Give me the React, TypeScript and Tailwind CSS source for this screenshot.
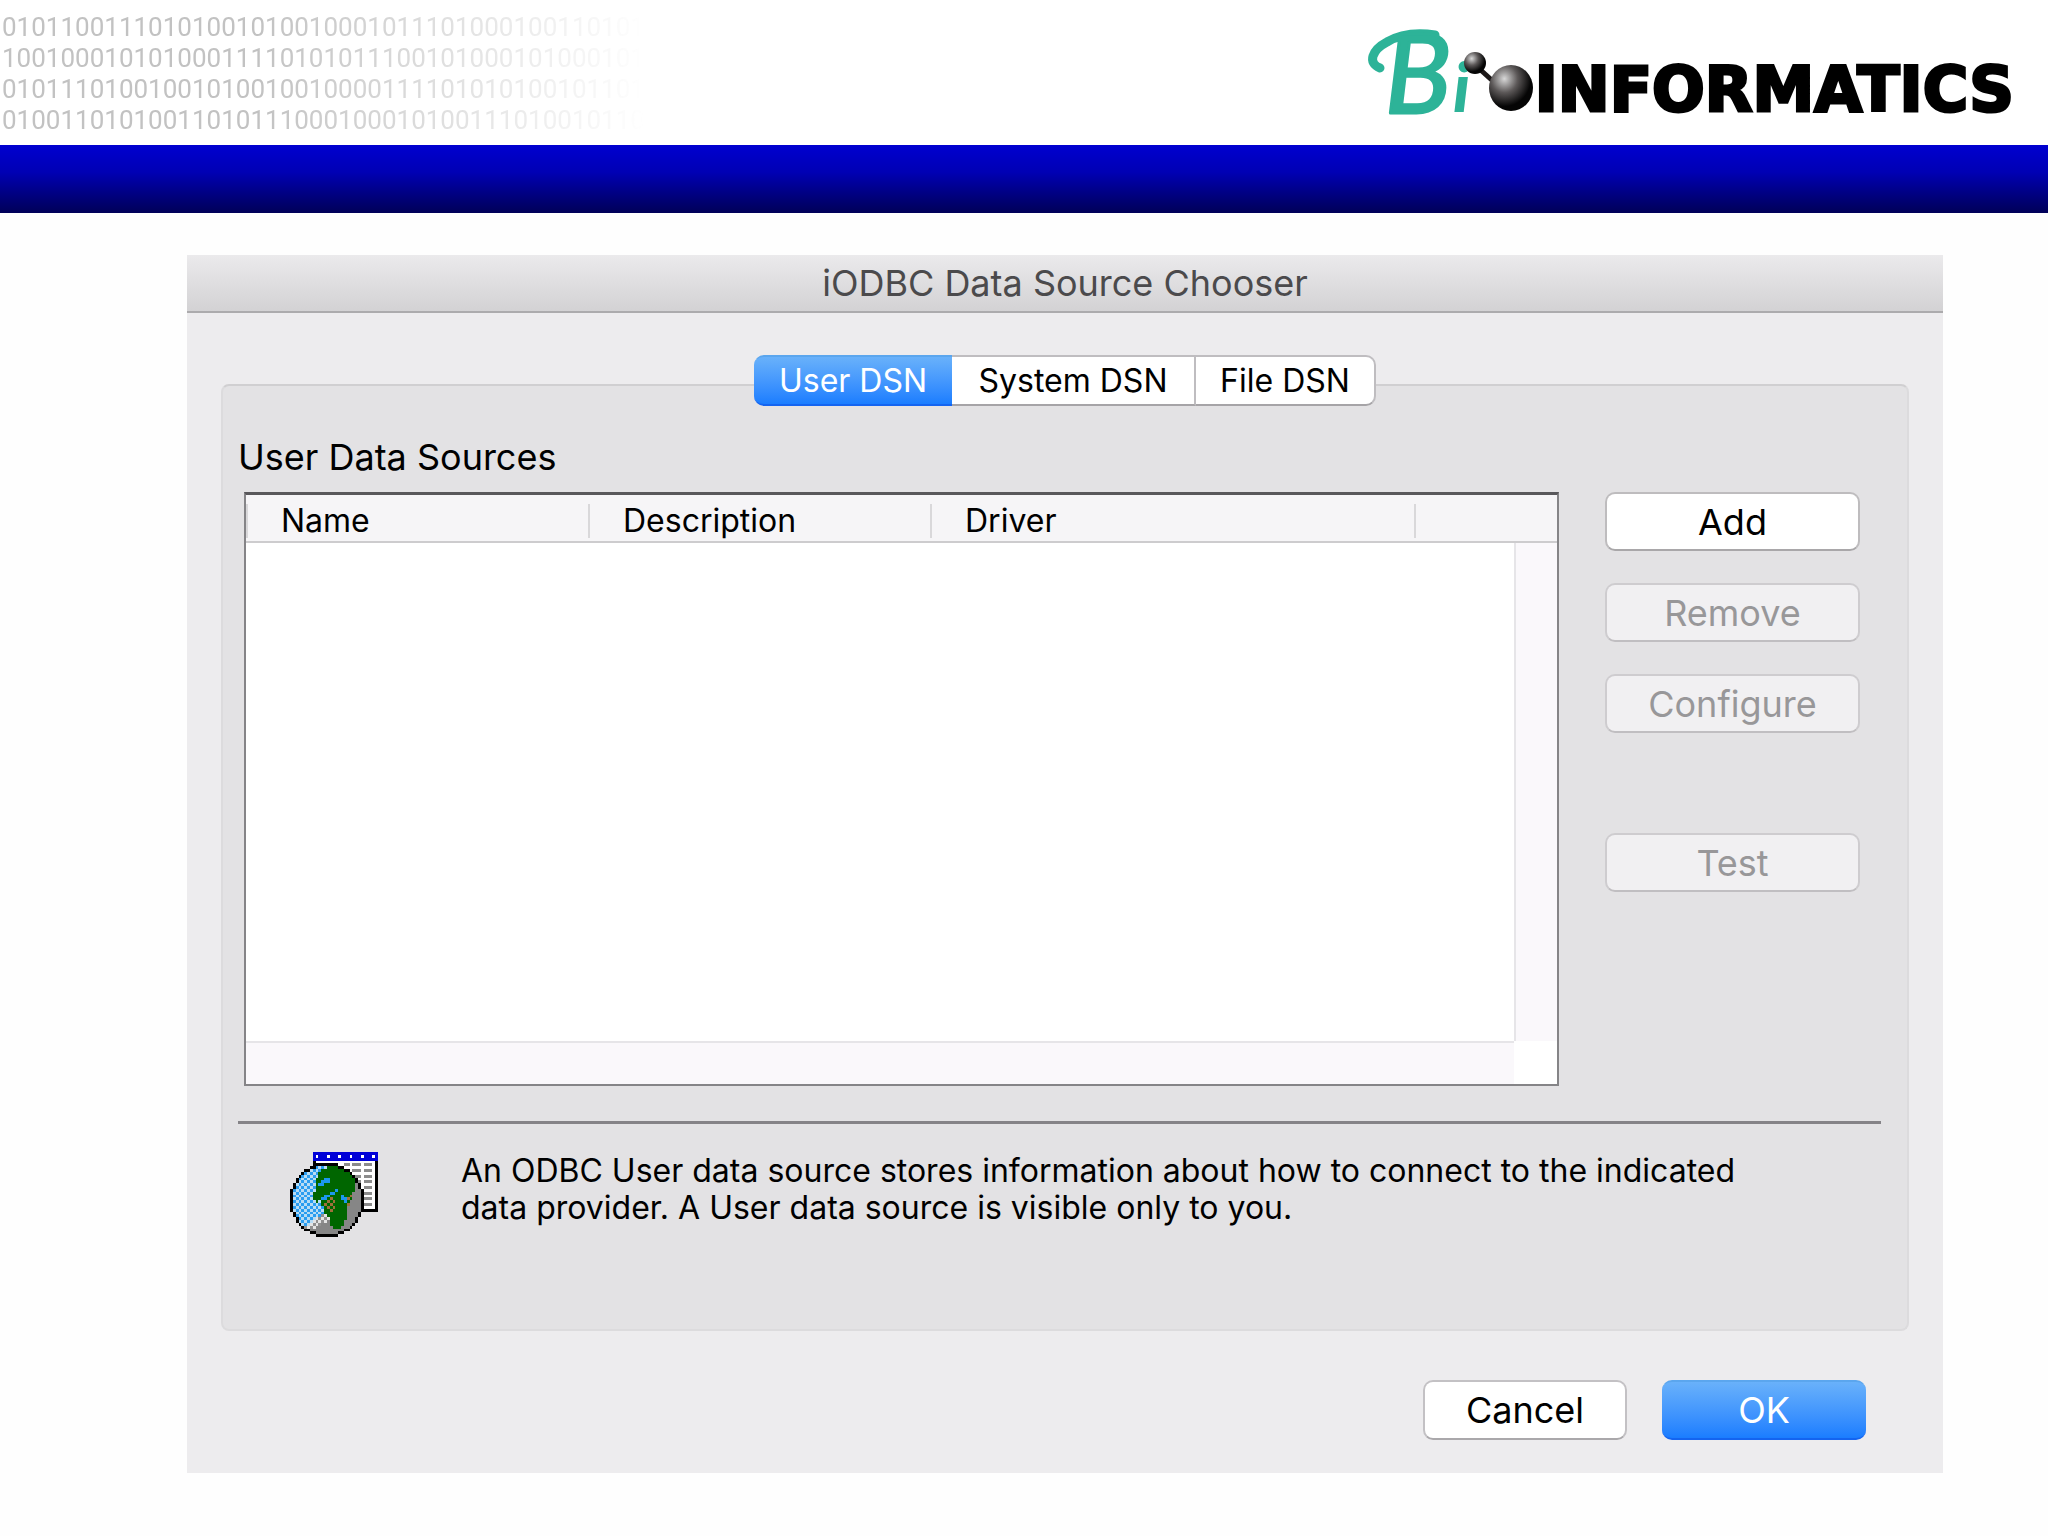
import { useState } from 'react'

const BINARY_ROWS = [
  '01011001110101001010010001011101000100110101',
  '10010001010100011110101011100101000101000101',
  '01011101001001010010010000111101010100101101',
  '01001101010011010111000100010100111010010110',
]

const TABS = [
  { id: 'user', label: 'User DSN', width: 'w-[198px]' },
  { id: 'system', label: 'System DSN', width: 'w-[244px]' },
  { id: 'file', label: 'File DSN', width: 'w-[180px]' },
]

// One character per pixel of the data source icon
const GLOBE_PIXELS = [
  '........bbbbbbbbbbbbbbbbbbbbbbb',
  '........bwbbbwbbbwbbbwbbbwbbbwb',
  '........bbbbbbbbbbbbbbbbbbbbbbb',
  '........kwwwwwwwwwwwwwwwwwwwwwk',
  '........kkkkkkkkkwwggwgggwgggwk',
  '.......kkssssGGGGkkwwwwwwwwwwwk',
  '.....kkssssGGGGGGGGkkwgggwgggwk',
  '....ksssssGGGGGGGGGGGkwwwwwwwwk',
  '...kssssssGGGGGGGGGGGGkggwgggwk',
  '..kssssssGGGaaGGGGGGGGGkwwwwwwk',
  '..kssssssGGaaaGGGGGGGGGkgwgggwk',
  '.ksssssssGaaGGGGGGGGGGGdkwwwwwk',
  '.ksssssssGGGGGGGGGGGGGGdkwgggwk',
  'kssssssssGGGGGGGaGGGGGGddkwwwwk',
  'ksssssssGGGGGGaaGGGGGGdddkgggwk',
  'ksssssssGGGGaaGGGGaGoodddkwwwwk',
  'ksssssssGGGaaoooGGaaoodddkgggwk',
  'kssssssssGsGooooGGGaoddddkwwwwk',
  'kssssssssssoooooGGGGoddddkgggwk',
  'ksssssssssssooooGGGGdddddkwwwwk',
  'ksssssssssssGooGGGGGdddddkkkkkk',
  '.kssssssssssGGGGGGGGddddk......',
  '.ksssssssssllGGGGGGGddddk......',
  '..ksssssslllllGGGGGGdddk.......',
  '..ksssssllllldGGGGGddddk.......',
  '...kssslllldddGGGGGdddk........',
  '....kllllddddddGGGdddk.........',
  '.....kkddddddddddddkk..........',
  '.......kkddddddddkk............',
  '.........kkkkkkkk..............',
]

const PIXEL_COLORS: Record<string, [string, string]> = {
  b: ['#0000d8', '#0000d8'],
  w: ['#ffffff', '#ffffff'],
  k: ['#000000', '#000000'],
  g: ['#8c8c8c', '#8c8c8c'],
  G: ['#006600', '#006600'],
  a: ['#1c98ee', '#1c98ee'],
  d: ['#868686', '#868686'],
  s: ['#2a9df0', '#b8dcf4'],
  o: ['#a0703c', '#006600'],
  l: ['#e4e4e4', '#909090'],
}

function DataSourceIcon() {
  return (
    <svg className="h-[85px] w-[88px] shrink-0" viewBox="0 0 31 30" preserveAspectRatio="none" shapeRendering="crispEdges" aria-hidden="true">
      {GLOBE_PIXELS.map((row, y) =>
        row.split('').map((c, x) =>
          c === '.' ? null : (
            <rect key={`${x}-${y}`} x={x} y={y} width={1} height={1} fill={PIXEL_COLORS[c][(x + y) % 2]} />
          )
        )
      )}
    </svg>
  )
}

function Logo() {
  return (
    <div className="flex items-end" role="img" aria-label="Bioinformatics">
      <svg className="h-[100px] w-[172px] shrink-0 overflow-visible" viewBox="0 0 172 100" aria-hidden="true">
        <defs>
          <radialGradient id="ball" cx="0.35" cy="0.3" r="0.6">
            <stop offset="0" stopColor="#d8d8d8" />
            <stop offset="0.5" stopColor="#5c5858" />
            <stop offset="1" stopColor="#050505" />
          </radialGradient>
        </defs>
        <path d="M17 49C4 44 9 31 24 23C36 16 52 13 72 16" fill="none" stroke="#2db398" strokeWidth="9" strokeLinecap="round" />
        <text x="22" y="94" className="font-[Lato,sans-serif] text-[110px] italic" fill="#2db398" stroke="#2db398" strokeWidth="3" strokeLinejoin="round">B</text>
        <text x="90" y="93" className="font-[Lato,sans-serif] text-[68px] font-black italic" fill="#2db398">i</text>
        <path d="M111 45L132 64" stroke="#1c1818" strokeWidth="5" />
        <ellipse cx="112" cy="44" rx="11" ry="11" fill="url(#ball)" />
        <ellipse cx="148" cy="69" rx="22" ry="23" fill="url(#ball)" />
      </svg>
      <span className="font-['DejaVu_Sans',sans-serif] text-[62px] leading-[58px] font-bold text-black [-webkit-text-stroke:3px_black]">
        INFORMATICS
      </span>
    </div>
  )
}

function SideButton({ label, disabled = false }: { label: string; disabled?: boolean }) {
  return (
    <button
      type="button"
      disabled={disabled}
      className="h-[59px] w-full rounded-[10px] border-2 border-[#bebcbe] border-b-[#a9a7a9] bg-white text-[36px] leading-[40px] text-black disabled:border-[#cecccf] disabled:border-b-[#c0bec1] disabled:bg-[#f1f0f2] disabled:text-[#989799]"
    >
      {label}
    </button>
  )
}

export default function App() {
  const [tab, setTab] = useState('user')

  return (
    <div className="min-h-screen bg-[#fefefe] pb-[63px] font-[Inter,'Liberation_Sans',sans-serif] text-black">
      <header>
        <div className="flex h-[145px] items-start justify-between bg-white pr-[34px]">
          <div
            className="pt-[12px] pl-[2px] font-[Roboto,sans-serif] text-[26px] leading-[31px] text-[#c2c2c2] [mask-image:linear-gradient(to_right,black_40%,transparent)]"
            aria-hidden="true"
          >
            {BINARY_ROWS.map((row) => (
              <p key={row}>{row}</p>
            ))}
          </div>
          <div className="pt-[19px]">
            <Logo />
          </div>
        </div>
        <div className="h-[68px] bg-linear-to-b from-[#0000d0] via-[#0000b4] via-40% to-[#000058]" />
      </header>

      <main className="mt-[42px] mr-[105px] ml-[187px] bg-[#edecee] pb-[33px]">
        <h1 className="h-[58px] border-b-2 border-[#acabad] bg-linear-to-b from-[#ebeaec] to-[#d3d2d4] text-center text-[36px] leading-[56px] text-[#4b4a4c]">
          iODBC Data Source Chooser
        </h1>

        <div className="px-[34px] pt-[42px]">
          <div className="relative -mb-[22px] flex h-[51px] justify-center" role="tablist">
            {TABS.map((t) => (
              <button
                key={t.id}
                type="button"
                role="tab"
                aria-selected={tab === t.id}
                onClick={() => setTab(t.id)}
                className={`${t.width} border-y-2 border-[#bfbdc0] border-b-[#a6a4a7] bg-white text-[32px] leading-[40px] not-first:border-r-2 first:rounded-l-[10px] last:rounded-r-[10px] aria-selected:border-t-[#5ba6ee] aria-selected:border-b-[#1464f0] aria-selected:bg-linear-to-b aria-selected:from-[#69b1fa] aria-selected:to-[#1a7dff] aria-selected:text-white`}
              >
                {t.label}
              </button>
            ))}
          </div>

          <section className="rounded-[8px] border-2 border-[#dcdbdd] border-t-[#d0cfd1] bg-[#e3e2e4] pt-[48px] pr-[26px] pb-[65px] pl-[15px]">
            <h2 className="text-[36px] leading-[46px]">User Data Sources</h2>

            <div className="mt-[12px] flex pr-[21px] pl-[6px]">
              <div className="flex h-[594px] flex-1 flex-col border-2 border-t-3 border-[#858487] border-t-[#59585b] bg-white">
                <table className="w-full table-fixed border-collapse text-left">
                  <thead>
                    <tr className="h-[47px] border-b-2 border-[#cdccce] bg-[#f6f5f7] text-[32px] leading-[34px]">
                      <th className="w-[344px] p-0 pt-[5px] font-normal">
                        <div className="border-r-2 border-l-2 border-[#d9d8da] pl-[33px]">Name</div>
                      </th>
                      <th className="w-[342px] p-0 pt-[5px] font-normal">
                        <div className="border-r-2 border-[#d9d8da] pl-[33px]">Description</div>
                      </th>
                      <th className="w-[484px] p-0 pt-[5px] font-normal">
                        <div className="border-r-2 border-[#d9d8da] pl-[33px]">Driver</div>
                      </th>
                      <td className="p-0" />
                    </tr>
                  </thead>
                </table>
                <div className="flex flex-1">
                  <div className="flex-1" />
                  <div className="w-[43px] border-l-2 border-[#e6e5e8] bg-[#faf8fb]" />
                </div>
                <div className="flex h-[43px]">
                  <div className="flex-1 border-t-2 border-[#e6e5e8] bg-[#faf8fb]" />
                  <div className="w-[43px]" />
                </div>
              </div>

              <div className="ml-[46px] flex w-[255px] flex-col gap-[32px]">
                <SideButton label="Add" />
                <SideButton label="Remove" disabled />
                <SideButton label="Configure" disabled />
                <div className="mt-[68px]">
                  <SideButton label="Test" disabled />
                </div>
              </div>
            </div>

            <hr className="mt-[35px] border-t-3 border-[#858387]" />

            <div className="mt-[28px] flex min-h-[112px] pl-[52px]">
              <DataSourceIcon />
              <p className="ml-[83px] max-w-[1330px] text-[32px] leading-[37px]">
                An ODBC User data source stores information about how to connect to the indicated data provider. A User data source is visible only to you.
              </p>
            </div>
          </section>

          <div className="mt-[49px] flex justify-end gap-[35px] pr-[43px]">
            <button type="button" className="h-[60px] w-[204px] rounded-[10px] border-2 border-[#c3c1c4] border-b-[#aaa8ab] bg-white text-[36px] leading-[40px]">
              Cancel
            </button>
            <button type="button" className="h-[60px] w-[204px] rounded-[10px] border-y-2 border-t-[#5ba6ee] border-b-[#1464f0] bg-linear-to-b from-[#69b1fa] to-[#1a7dff] text-[36px] leading-[40px] text-white">
              OK
            </button>
          </div>
        </div>
      </main>
    </div>
  )
}
